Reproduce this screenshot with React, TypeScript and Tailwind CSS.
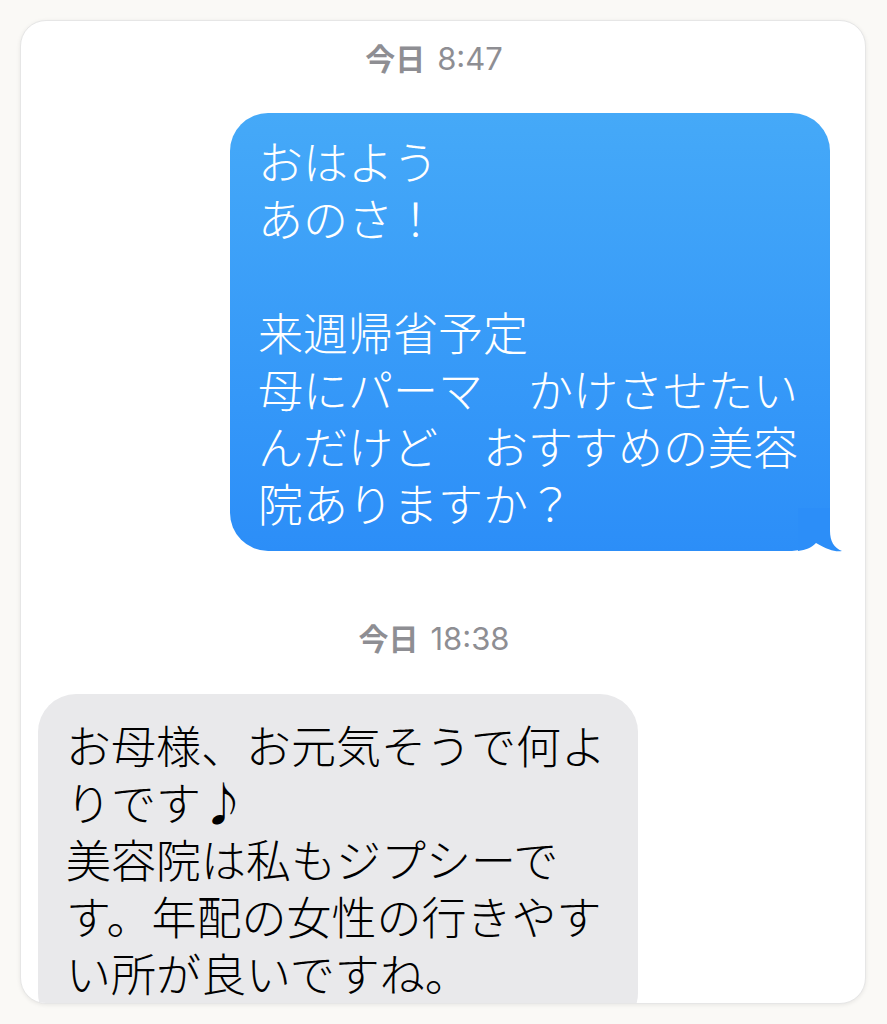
const jp = "font-['Noto_Sans_CJK_JP',sans-serif]";

function Stamp({ day, time }: { day: string; time: string }) {
	return (
		<div className="flex items-baseline justify-center pr-[18px] leading-[34px] text-[#8e8e93]">
			<span className={`text-[30px] font-semibold ${jp}`}>{day}</span>
			<span className="ml-[12px] font-['Inter',sans-serif] text-[31px] font-normal">
				{time}
			</span>
		</div>
	);
}

export default function App() {
	const sent = [
		"おはよう",
		"あのさ！",
		"\u00a0",
		"来週帰省予定",
		"母にパーマ　かけさせたい",
		"んだけど　おすすめの美容",
		"院ありますか？",
	];
	const received = [
		"お母様、お元気そうで何よ",
		"りです♪",
		"美容院は私もジプシーで",
		"す。年配の女性の行きやす",
		"い所が良いですね。",
	];

	return (
		<div className="h-[1024px] w-[887px] bg-[#faf9f6] pt-[20px] pr-[21px] pb-[20px] pl-[20px]">
			<div className="flex h-[984px] flex-col overflow-hidden rounded-[26px] border border-[#e6e6e6] bg-white pt-[19px] shadow-[0_1px_4px_rgba(0,0,0,0.08)]">
				<Stamp day="今日" time="8:47" />

				<div className="mt-[37px] mr-[35px] flex justify-end">
					<div className="relative">
						<div
							className={`w-[600px] rounded-[38px] bg-linear-to-b from-[#45a9f8] to-[#2c8ef8] pt-[19px] pr-[30px] pb-[20px] pl-[28px] text-[45px] leading-[57px] font-light text-white ${jp}`}
						>
							{sent.map((line, i) => (
								<div key={i} className="whitespace-nowrap">
									{line}
								</div>
							))}
						</div>
						<svg
							className="absolute right-[-13px] bottom-[-1px]"
							width="45"
							height="44"
							viewBox="0 0 45 44"
						>
							<path
								d="M32 0 L32 23 C32 33 36 40 44 43 C37 44 30 42 18 35 C13 40 8 42 0 43 L0 0 Z"
								fill="#2c8ef8"
							/>
						</svg>
					</div>
				</div>

				<div className="mt-[69px]">
					<Stamp day="今日" time="18:38" />
				</div>

				<div className="mt-[38px] ml-[17px]">
					<div
						className={`w-[600px] rounded-[38px] bg-[#e9e9eb] pt-[22px] pr-[30px] pb-[30px] pl-[28px] text-[45px] leading-[57px] font-light text-black ${jp}`}
					>
						{received.map((line, i) => (
							<div key={i} className="whitespace-nowrap">
								{line}
							</div>
						))}
					</div>
				</div>
			</div>
		</div>
	);
}
